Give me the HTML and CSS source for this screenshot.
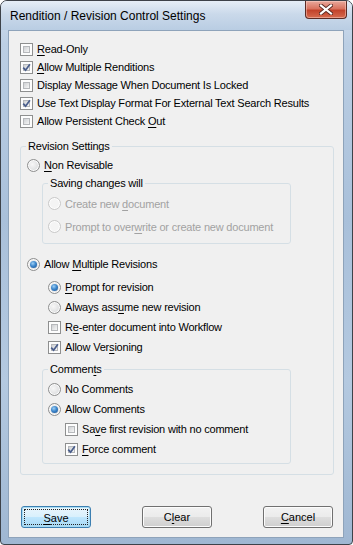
FILE: index.html
```html
<!DOCTYPE html>
<html lang="en">
<head>
    <meta charset="UTF-8">
    <title>Rendition / Revision Control Settings</title>
    <link rel="stylesheet" href="styles.css">
</head>
<body>
    <div class="window">
        <div class="titlebar">
            <span class="title">Rendition / Revision Control Settings</span>
            <button class="close" title="Close">
                <svg width="14" height="11" viewBox="0 0 14 11">
                    <path d="M2 1.5 L12 9.5 M12 1.5 L2 9.5" stroke="#5a2a22" stroke-width="4" stroke-linecap="square"/>
                    <path d="M2 1.5 L12 9.5 M12 1.5 L2 9.5" stroke="#fff" stroke-width="2.2" stroke-linecap="square"/>
                </svg>
            </button>
        </div>
        <div class="client">
            <!-- top level options -->
            <div class="options">
                <label class="row"><span class="check"></span><span><u>R</u>ead-Only</span></label>
                <label class="row"><span class="check checked"></span><span><u>A</u>llow Multiple Renditions</span></label>
                <label class="row"><span class="check"></span><span>Display Message When Document Is Locked</span></label>
                <label class="row"><span class="check checked"></span><span>Use Text Display Format For External Text Search Results</span></label>
                <label class="row"><span class="check"></span><span>Allow Persistent Check <u>O</u>ut</span></label>
            </div>

            <fieldset class="group revision">
                <legend>Revision Settings</legend>
                <label class="row"><span class="radio"></span><span><u>N</u>on Revisable</span></label>

                <fieldset class="group sub saving">
                    <legend>Saving changes will</legend>
                    <label class="row tall disabled"><span class="radio"></span><span>Create new <u>d</u>ocument</span></label>
                    <label class="row tall disabled"><span class="radio"></span><span>Prompt to over<u>w</u>rite or create new document</span></label>
                </fieldset>

                <label class="row multi"><span class="radio selected"></span><span>Allow <u>M</u>ultiple Revisions</span></label>
                <div class="indent">
                    <label class="row step"><span class="radio selected"></span><span><u>P</u>rompt for revision</span></label>
                    <label class="row step"><span class="radio"></span><span>Always ass<u>u</u>me new revision</span></label>
                    <label class="row step"><span class="check"></span><span>R<u>e</u>-enter document into Workflow</span></label>
                    <label class="row step"><span class="check checked"></span><span>Allow Ver<u>s</u>ioning</span></label>
                </div>

                <fieldset class="group sub comments">
                    <legend>Commen<u>t</u>s</legend>
                    <label class="row step"><span class="radio"></span><span>No Comments</span></label>
                    <label class="row step"><span class="radio selected"></span><span>Allow Comments</span></label>
                    <div class="indent-small">
                        <label class="row step"><span class="check"></span><span>Sa<u>v</u>e first revision with no comment</span></label>
                        <label class="row step"><span class="check checked"></span><span><u>F</u>orce comment</span></label>
                    </div>
                </fieldset>
            </fieldset>

            <div class="buttons">
                <button class="btn default"><span class="focus"><u>S</u>ave</span></button>
                <button class="btn">C<u>l</u>ear</button>
                <button class="btn"><u>C</u>ancel</button>
            </div>
        </div>
    </div>
</body>
</html>
```

FILE: styles.css
```css
:root {
    --frame-dark: #3d4249;
    --client-bg: #f0f0f0;
    --text: #000;
    --muted: #a2a2a2;
    --group-line: #d5dfe5;
}
html, body {
    margin: 0;
    height: 100%;
}
body {
    font-family: "Liberation Sans", Arial, sans-serif;
    font-size: 11px;
    letter-spacing: -0.2px;
    color: var(--text);
    background: #fff;
}
u {
    text-decoration-thickness: 1px;
    text-underline-offset: 2px;
}
/* Window frame */
.window {
    box-sizing: border-box;
    width: 353px;
    height: 545px;
    border: 1px solid var(--frame-dark);
    border-radius: 7px 7px 4px 4px;
    background: linear-gradient(180deg, #d3e0ee 0%, #bccfe4 8%, #a9c0da 40%, #b4c9e0 70%, #9fb7d2 100%);
    display: flex;
    flex-direction: column;
    overflow: hidden;
}
.titlebar {
    height: 29px;
    display: flex;
    justify-content: space-between;
    align-items: flex-start;
    background: linear-gradient(180deg, #e6eef7 0%, #cad9ea 45%, #b9cde3 100%);
}
.title {
    margin: 7px 0 0 9px;
    font-size: 12px;
    letter-spacing: 0;
    line-height: 16px;
    color: #000;
}
.close {
    margin: 0 5px 0 0;
    width: 42px;
    height: 18px;
    padding: 0;
    border: 1px solid #5b2b24;
    border-top: none;
    border-radius: 0 0 4px 4px;
    background: linear-gradient(180deg, #e9a99c 0%, #d9735f 45%, #c2432b 55%, #d66b4f 100%);
    box-shadow: inset 0 0 0 1px rgba(255, 220, 210, 0.45);
    display: flex;
    align-items: center;
    justify-content: center;
}
.client {
    flex: 1;
    margin: 0 8px 6px 7px;
    border: 1px solid #8ea3ba;
    background: var(--client-bg);
    padding: 9px 9px 0 11px;
    display: flex;
    flex-direction: column;
}
/* Rows */
.row {
    display: flex;
    align-items: center;
    height: 18px;
    gap: 4px;
    white-space: nowrap;
}
.row.tall {
    height: 23px;
}
.row.step {
    height: 20px;
}
.row.disabled {
    color: var(--muted);
}
/* Checkboxes */
.check {
    box-sizing: border-box;
    flex: none;
    width: 13px;
    height: 13px;
    border: 1px solid #8e8f8f;
    padding: 2px;
    background: #fdfdfd;
    position: relative;
}
.check::before {
    content: "";
    display: block;
    box-sizing: border-box;
    width: 100%;
    height: 100%;
    border: 1px solid #b6b8bb;
    background: linear-gradient(135deg, #cfd1d4 0%, #e6e7e8 60%, #f6f6f6 100%);
}
.check.checked::after {
    content: "";
    position: absolute;
    left: 1px;
    top: 1px;
    width: 9px;
    height: 9px;
    background: url("data:image/svg+xml;utf8,<svg xmlns='http://www.w3.org/2000/svg' width='9' height='9' viewBox='0 0 9 9'><path d='M1.2 4.6 L3.6 7.2 L7.9 1.2' fill='none' stroke='%234a5e8c' stroke-width='1.7'/></svg>") no-repeat;
}
/* Radio buttons */
.radio {
    box-sizing: border-box;
    flex: none;
    width: 13px;
    height: 13px;
    border-radius: 50%;
    border: 1px solid #8e8f8f;
    background: radial-gradient(circle at 40% 40%, #f7f7f7 0%, #e2e3e4 55%, #cfd1d3 100%);
    box-shadow: inset 0 0 0 1px #fbfbfb;
    position: relative;
}
.radio.selected::after {
    content: "";
    position: absolute;
    left: 2px;
    top: 2px;
    width: 7px;
    height: 7px;
    border-radius: 50%;
    background: radial-gradient(circle at 40% 35%, #9fd0f5 0%, #3d87cc 45%, #194f8f 100%);
}
.disabled .radio {
    border-color: #c9c9c9;
    background: #f4f4f4;
    box-shadow: inset 0 0 0 1px #fdfdfd;
}
/* Group boxes */
.group {
    margin: 0;
    border: 1px solid var(--group-line);
    border-radius: 3px;
    min-width: 0;
}
.group legend {
    padding: 0 2px;
    line-height: 16px;
}
.revision {
    margin-top: 8px;
    width: 314px;
    box-sizing: border-box;
    padding: 2px 6px 10px 6px;
}
.revision > legend {
    margin-left: -1px;
}
.sub {
    box-sizing: border-box;
    width: 249px;
    margin-left: 15px;
    padding: 1px 5px 5px 5px;
}
.saving {
    margin-top: 1px;
}
.comments {
    margin-top: 4px;
    padding-top: 2px;
    padding-bottom: 4px;
}
.multi {
    margin-top: 11px;
}
.indent {
    margin-left: 21px;
    margin-top: 4px;
}
.indent-small {
    margin-left: 17px;
}
/* Dialog buttons */
.buttons {
    margin: 31px 0 0 1px;
    width: 312px;
    display: flex;
    justify-content: space-between;
}
.btn {
    box-sizing: border-box;
    width: 70px;
    height: 22px;
    padding: 0;
    font: inherit;
    color: #000;
    border: 1px solid #707070;
    border-radius: 3px;
    background: linear-gradient(180deg, #f2f2f2 0%, #ebebeb 48%, #dddddd 52%, #cfcfcf 100%);
    box-shadow: inset 0 0 0 1px #fcfcfc;
}
.btn.default {
    border-color: #3c7fb1;
    box-shadow: inset 0 0 0 1px #a8dcf3;
    background: linear-gradient(180deg, #eaf6fd 0%, #d9f0fc 48%, #bee6fd 52%, #a7d9f5 100%);
}
.btn .focus {
    display: block;
    margin: 2px;
    height: 16px;
    line-height: 16px;
    border: 1px dotted #222;
    box-sizing: border-box;
}
```
